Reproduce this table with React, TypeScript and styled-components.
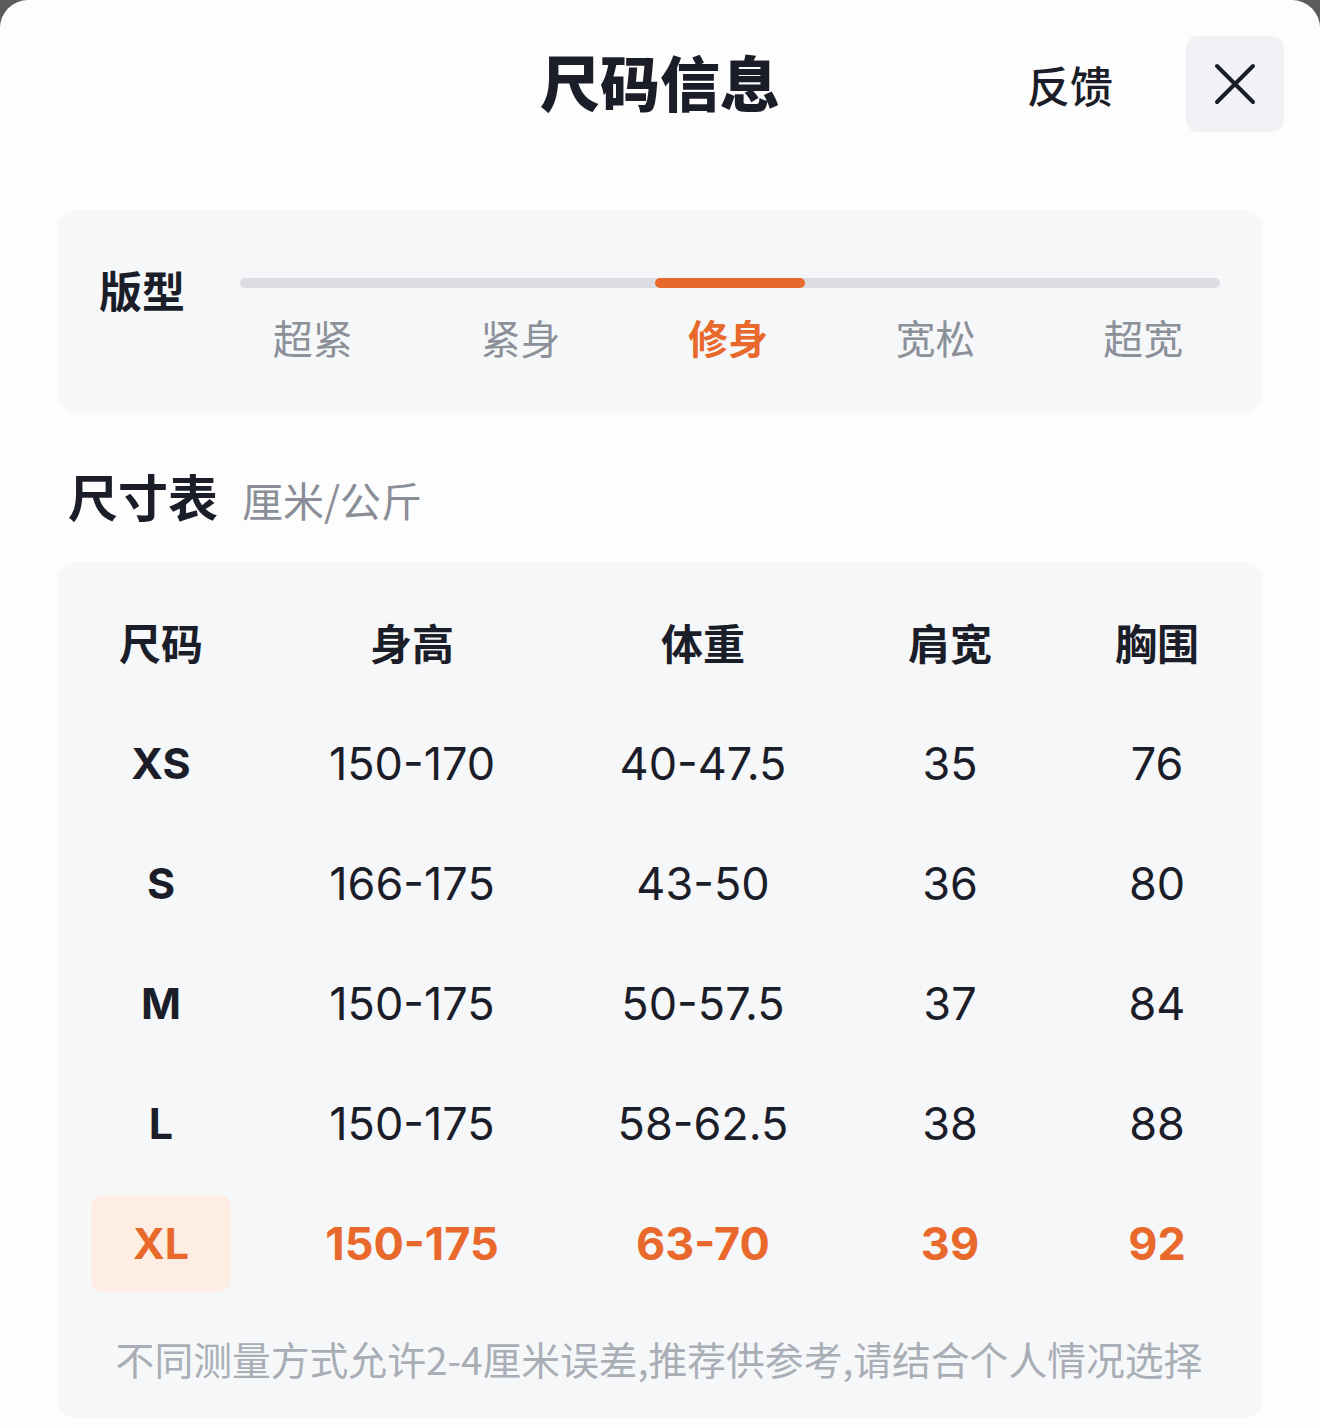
import React from 'react';
import styled, { createGlobalStyle } from 'styled-components';

const ORANGE = '#e8692b';
const INK = '#1b1d29';

const FITS = ['超紧', '紧身', '修身', '宽松', '超宽'];
const ACTIVE_FIT = 2;

const HEADERS = ['尺码', '身高', '体重', '肩宽', '胸围'];

const ROWS = [
  ['XS', '150-170', '40-47.5', '35', '76'],
  ['S', '166-175', '43-50', '36', '80'],
  ['M', '150-175', '50-57.5', '37', '84'],
  ['L', '150-175', '58-62.5', '38', '88'],
  ['XL', '150-175', '63-70', '39', '92'],
];
const ACTIVE_ROW = 4;

const GlobalStyle = createGlobalStyle`
  html, body {
    margin: 0;
    padding: 0;
    background: #5c5c5e;
  }
  body {
    font-family: Inter, "Noto Sans CJK SC", sans-serif;
    color: ${INK};
  }
`;

const Sheet = styled.div`
  width: 1320px;
  height: 1425px;
  box-sizing: border-box;
  background: #fdfdfd;
  border-radius: 28px 28px 0 0;
  padding-top: 36px;
  overflow: hidden;
`;

const Header = styled.header`
  display: grid;
  grid-template-columns: 1fr auto 1fr;
  align-items: center;
  padding: 0 36px;
`;

const Title = styled.h1`
  grid-column: 2;
  margin: 0;
  font-family: "Noto Sans CJK SC", sans-serif;
  font-size: 60px;
  font-weight: 900;
  line-height: 96px;
  transform: translateY(-3px);
`;

const Actions = styled.div`
  justify-self: end;
  display: flex;
  align-items: center;
  gap: 73px;
`;

const Feedback = styled.span`
  font-family: "Noto Sans CJK SC", sans-serif;
  font-size: 43px;
  font-weight: 500;
`;

const CloseButton = styled.button`
  width: 98px;
  height: 96px;
  border: 0;
  border-radius: 12px;
  background: #f1f2f5;
  display: flex;
  align-items: center;
  justify-content: center;
  padding: 0;
  cursor: pointer;
`;

const Content = styled.main`
  padding: 0 57px;
`;

const Card = styled.section`
  background: #f6f7f9;
  border-radius: 20px;
`;

const FitCard = styled(Card)`
  margin-top: 78px;
  height: 203px;
  box-sizing: border-box;
  padding: 51px 16px 0 42px;
  display: flex;
`;

const FitLabel = styled.div`
  width: 110px;
  font-family: "Noto Sans CJK SC", sans-serif;
  font-size: 43px;
  font-weight: 700;
  line-height: 56px;
`;

const FitScale = styled.div`
  flex: 1;
  padding-top: 17px;
`;

const Track = styled.div`
  height: 10px;
  margin: 0 27px 0 31px;
  border-radius: 5px;
  background: #dcdde2;
  display: flex;
  justify-content: center;
`;

const TrackFill = styled.div`
  width: 150px;
  height: 10px;
  border-radius: 5px;
  background: ${ORANGE};
`;

const FitOptions = styled.div`
  margin-top: 21px;
  display: grid;
  grid-template-columns: repeat(5, 1fr);
`;

const FitOption = styled.span<{ active?: boolean }>`
  text-align: center;
  font-family: "Noto Sans CJK SC", sans-serif;
  font-size: 40px;
  line-height: 56px;
  font-weight: ${p => (p.active ? 700 : 400)};
  color: ${p => (p.active ? ORANGE : '#8b9099')};
`;

const SectionTitle = styled.div`
  margin: 52px 0 33px 11px;
  display: flex;
  align-items: baseline;
  gap: 24px;
  line-height: 60px;
`;

const SectionName = styled.span`
  font-family: "Noto Sans CJK SC", sans-serif;
  font-size: 50px;
  font-weight: 700;
`;

const SectionUnit = styled.span`
  font-family: "Noto Sans CJK SC", sans-serif;
  font-size: 41px;
  color: #8a8e97;
`;

const TableCard = styled(Card)`
  padding: 17px 36px 36px 34px;
`;

const Row = styled.div<{ head?: boolean }>`
  display: grid;
  grid-template-columns: 140px 362px 220px 274px 140px;
  height: ${p => (p.head ? 124 : 120)}px;
  align-items: center;
`;

const HeadCell = styled.div`
  text-align: center;
  font-family: "Noto Sans CJK SC", sans-serif;
  font-size: 42px;
  font-weight: 700;
`;

const Cell = styled.div<{ strong?: boolean; active?: boolean }>`
  height: 97px;
  display: flex;
  align-items: center;
  justify-content: center;
  border-radius: 12px;
  font-size: 45px;
  font-weight: ${p => (p.strong || p.active ? 700 : 400)};
  color: ${p => (p.active ? ORANGE : INK)};
`;

const SizeCell = styled(Cell)`
  font-size: 43px;
  background: ${p => (p.active ? '#fdede2' : 'transparent')};
`;

const Note = styled.p`
  margin: 31px 0 0;
  text-align: center;
  font-family: "Noto Sans CJK SC", sans-serif;
  font-size: 38.8px;
  line-height: 48px;
  color: #a9aeb6;
`;

const CloseIcon = () => (
  <svg width="42" height="42" viewBox="0 0 42 42" fill="none">
    <path
      d="M3 3 L39 39 M39 3 L3 39"
      stroke={INK}
      strokeWidth="4"
      strokeLinecap="round"
    />
  </svg>
);

export default function App() {
  return (
    <>
      <GlobalStyle />
      <Sheet>
        <Header>
          <Title>尺码信息</Title>
          <Actions>
            <Feedback>反馈</Feedback>
            <CloseButton aria-label="关闭">
              <CloseIcon />
            </CloseButton>
          </Actions>
        </Header>

        <Content>
          <FitCard>
            <FitLabel>版型</FitLabel>
            <FitScale>
              <Track>
                <TrackFill />
              </Track>
              <FitOptions>
                {FITS.map((f, i) => (
                  <FitOption key={f} active={i === ACTIVE_FIT}>
                    {f}
                  </FitOption>
                ))}
              </FitOptions>
            </FitScale>
          </FitCard>

          <SectionTitle>
            <SectionName>尺寸表</SectionName>
            <SectionUnit>厘米/公斤</SectionUnit>
          </SectionTitle>

          <TableCard>
            <Row head>
              {HEADERS.map(h => (
                <HeadCell key={h}>{h}</HeadCell>
              ))}
            </Row>
            {ROWS.map((row, r) => (
              <Row key={row[0]}>
                <SizeCell strong active={r === ACTIVE_ROW}>
                  {row[0]}
                </SizeCell>
                {row.slice(1).map((v, c) => (
                  <Cell key={c} active={r === ACTIVE_ROW}>
                    {v}
                  </Cell>
                ))}
              </Row>
            ))}
            <Note>不同测量方式允许2-4厘米误差,推荐供参考,请结合个人情况选择</Note>
          </TableCard>
        </Content>
      </Sheet>
    </>
  );
}
